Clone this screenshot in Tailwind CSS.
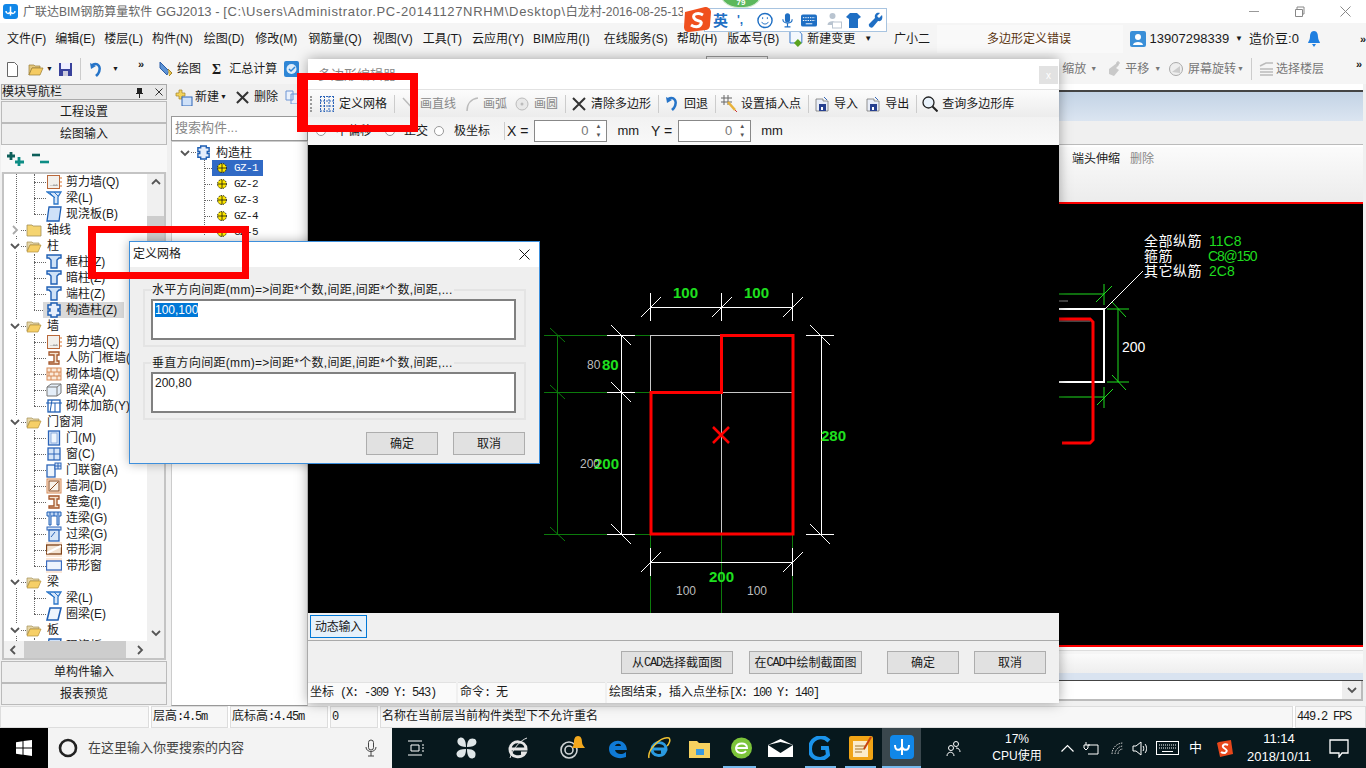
<!DOCTYPE html>
<html lang="zh-CN">
<head>
<meta charset="UTF-8">
<title>广联达BIM钢筋算量软件 GGJ2013</title>
<script src="https://cdn.jsdelivr.net/npm/@tailwindcss/browser@4"></script>
</head>
<body class="relative w-[1366px] h-[768px] overflow-hidden bg-white text-[12px] text-[#1a1a1a] font-['Liberation_Sans','Noto_Sans_CJK_SC',sans-serif]">

<!-- icon symbols -->
<svg class="hidden">
  <symbol id="col" viewBox="0 0 16 16"><path d="M1 1h14v3h-2l-2 2v8H5V6L3 4H1z" fill="#cfe2f7" stroke="#1f5fb4" stroke-width="1.4"/></symbol>
  <symbol id="wall" viewBox="0 0 16 16"><rect x="1.5" y="1.5" width="12" height="13" fill="#f2f0ec" stroke="#b9683a"/><path d="M4 12l1-1 1 1 2-2 1 1 2-1 1 2z" fill="#aaa"/><path d="M15 3v2M15 7v2M15 11v2" stroke="#d9752f"/></symbol>
  <symbol id="beam" viewBox="0 0 16 16"><path d="M1 2h14l-3 5v7H8V7z" fill="#d6e7fa" stroke="#2d77c9" stroke-width="1.3"/><path d="M4 3l5 5M8 2l4 4" stroke="#2d77c9"/></symbol>
  <symbol id="slab" viewBox="0 0 16 16"><path d="M3 1h12l-2 14H1z" fill="#cfe1f8" stroke="#1f5fb4" stroke-width="1.3"/></symbol>
  <symbol id="gzz" viewBox="0 0 16 16"><path d="M5 1h6v2h3v4h-2v2h2v4h-3v2H5v-2H2V9h2V7H2V3h3z" fill="#e6eefb" stroke="#1f5fb4" stroke-width="1.5"/></symbol>
  <symbol id="frame" viewBox="0 0 16 16"><path d="M3 2h10v3h-2v6h2v3H3v-2h5V5H3z" fill="#f4e2cf" stroke="#a4562a" stroke-width="1.3"/></symbol>
  <symbol id="brick" viewBox="0 0 16 16"><rect x="1" y="2" width="14" height="12" fill="#fbeadb" stroke="#d68a57"/><path d="M1 6h14M1 10h14M5 2v4M11 2v4M8 6v4M3 6v4M13 6v4M5 10v4M11 10v4" stroke="#d68a57"/></symbol>
  <symbol id="dark" viewBox="0 0 16 16"><path d="M1 5l4-3h10v9l-4 3H1z" fill="#e4eef9" stroke="#777"/><path d="M1 5h10v9M11 5l4-3" stroke="#777" fill="none"/></symbol>
  <symbol id="rein" viewBox="0 0 16 16"><rect x="2" y="2" width="12" height="12" fill="none" stroke="#1f5fb4" stroke-width="1.3"/><path d="M0 5h16M6 2l-2 12M9 5v9" stroke="#1f5fb4"/></symbol>
  <symbol id="door" viewBox="0 0 16 16"><rect x="2.5" y="1" width="11" height="14" fill="#d6e5f8" stroke="#2c64b8" stroke-width="1.3"/><rect x="5" y="3" width="6" height="10" fill="#eef5fd" stroke="#6d95d5" stroke-width=".7"/></symbol>
  <symbol id="win" viewBox="0 0 16 16"><rect x="2" y="2" width="12" height="12" fill="#d6e5f8" stroke="#2c64b8" stroke-width="1.3"/><path d="M8 2v12M2 8h12" stroke="#2c64b8"/></symbol>
  <symbol id="dwin" viewBox="0 0 16 16"><rect x="1" y="3" width="8" height="12" fill="#eef5fd" stroke="#2c64b8" stroke-width="1.3"/><rect x="9" y="1" width="6" height="6" fill="#d6e5f8" stroke="#2c64b8"/><path d="M12 1v6M9 4h6" stroke="#2c64b8"/></symbol>
  <symbol id="hole" viewBox="0 0 16 16"><rect x="1" y="1" width="14" height="14" fill="#fbeadb" stroke="#d68a57"/><rect x="3" y="3" width="10" height="10" fill="#f8f2ea" stroke="#8a4a20"/><path d="M4 12l8-8" stroke="#8a4a20"/></symbol>
  <symbol id="lin" viewBox="0 0 16 16"><path d="M1 2h14v4h-2v9h-2V6H5v9H3V6H1z" fill="#bcd4f3" stroke="#1f5fb4"/><path d="M4 2v4M8 2v4M12 2v4" stroke="#1f5fb4"/></symbol>
  <symbol id="guo" viewBox="0 0 16 16"><rect x="1" y="1" width="14" height="3" fill="#d6e5f8" stroke="#2c64b8"/><rect x="3" y="4" width="10" height="11" fill="#d6e5f8" stroke="#2c64b8" stroke-width="1.3"/><path d="M5 11l4-5" stroke="#2c64b8"/></symbol>
  <symbol id="band" viewBox="0 0 16 16"><path d="M0 0h16v15H0z" fill="#f9e6d6"/><rect x="0.5" y="3" width="15" height="9" fill="#f3e3d2" stroke="#7e4218" stroke-width="1.3"/><path d="M1 11l14-7" stroke="#fff" stroke-width="2"/></symbol>
  <symbol id="bandw" viewBox="0 0 16 16"><path d="M0 0h16v15H0z" fill="#fbe6d6"/><rect x="0.5" y="3" width="15" height="9" fill="#eef4fd" stroke="#3a6cc0" stroke-width="1.3"/></symbol>
  <symbol id="ring" viewBox="0 0 16 16"><path d="M4 2h11l-3 12H1z" fill="#eef5fd" stroke="#1f5fb4" stroke-width="1.6"/></symbol>
  <symbol id="folder" viewBox="0 0 16 16"><path d="M1 4h5l1 1h6v2H4L1 13z" fill="#e6d6a8" stroke="#a39055" stroke-width=".7"/><path d="M4 7h11l-3 7H1z" fill="#f6cf67" stroke="#b38f3a" stroke-width=".7"/></symbol>
  <symbol id="closed" viewBox="0 0 16 16"><path d="M1 3h5l1 1h8v10H1z" fill="#f5d470" stroke="#a39055" stroke-width=".8"/></symbol>
  <symbol id="down" viewBox="0 0 12 12"><path d="M2 4l4 4 4-4" fill="none" stroke="#555" stroke-width="1.8"/></symbol>
  <symbol id="right" viewBox="0 0 12 12"><path d="M4 2l4 4-4 4" fill="none" stroke="#aaa" stroke-width="1.8"/></symbol>
  <symbol id="gz" viewBox="0 0 12 12"><circle cx="6" cy="6" r="4.5" fill="#ffe800" stroke="#111" stroke-dasharray="1.4 1"/><path d="M2 6h8M6 2v8" stroke="#111" stroke-width=".8"/></symbol>
  <symbol id="disk" viewBox="0 0 16 16"><path d="M2 3h7v2h5v10H2z" fill="#e9eef8" stroke="#777" stroke-width=".8"/><rect x="5" y="8" width="7" height="7" fill="#27408f"/><rect x="7" y="11" width="2" height="3" fill="#fff"/><path d="M10 1l3 3" stroke="#3465b5"/></symbol>
</svg>

<!-- main application window -->
<div class="flex flex-col h-[768px]">
  <!-- title bar -->
  <div class="flex items-center h-[23px] bg-white pl-[3px] text-[13px] text-[#666]">
    <svg width="15" height="15" viewBox="0 0 15 15"><rect width="15" height="15" rx="3" fill="#1187e8"/><path d="M7.5 2.5v9M3 7c0 3 3 3 4.500 1 1.500 2 4.500 2 4.500-1" fill="none" stroke="#fff" stroke-width="1.500"/></svg>
    <span class="ml-[5px] w-[660px] overflow-hidden whitespace-nowrap"><span class="text-[12px]">广联达BIM钢筋算量软件</span> GGJ2013 - <span class="text-[13px] tracking-[0.67px]">[C:\Users\Administrator.PC-20141127NRHM\Desktop\</span><span class="text-[12px]">白龙村-2016-08-25-13-27</span></span>
    <div class="ml-auto flex items-center text-[#888]">
      <span class="w-[10px] border-t border-[#999] mr-[35px]"></span>
      <svg width="11" height="11" viewBox="0 0 11 11" class="mr-[35px]"><path d="M1.500 3.500h7v7h-7zM3 3.500V1h7v7H8.500" fill="none" stroke="#888"/></svg>
      <svg width="11" height="11" viewBox="0 0 11 11" class="mr-[15px]"><path d="M.5.5l10 10M10.500.5l-10 10" stroke="#888"/></svg>
    </div>
  </div>

  <!-- menu bar -->
  <div class="flex items-center h-[31px] bg-[#f5f5f5] pl-[7px] gap-[9px] whitespace-nowrap">
    <span>文件(F)</span><span>编辑(E)</span><span>楼层(L)</span><span>构件(N)</span><span class="ml-[2px]">绘图(D)</span><span class="ml-[2px]">修改(M)</span><span class="ml-[2px]">钢筋量(Q)</span><span class="ml-[2px]">视图(V)</span><span class="ml-[1px]">工具(T)</span><span class="ml-[1px]">云应用(Y)</span><span>BIM应用(I)</span><span class="ml-[5px]">在线服务(S)</span><span>帮助(H)</span><span class="ml-[1px]">版本号(B)</span>
    <svg width="16" height="18" viewBox="0 0 16 18"><path d="M2 1h9l3 3v9H2z" fill="#f4f8fd" stroke="#3a78c9"/><path d="M10 9l4 4-4 4-4-4z" fill="#5ba31f"/></svg>
    <span class="-ml-[6px]">新建变更</span>
    <span class="text-[8px] ml-[0px]">▼</span>
    <span class="ml-[13px]">广小二</span>
    <div class="flex items-center h-[28px] w-[187px] -ml-[2px] pl-[50px] bg-[#f9f9f9] text-[#5b3510] text-[12px]">多边形定义错误</div>
    <div class="flex items-center -ml-[2px]">
      <svg width="16" height="16" viewBox="0 0 16 16"><rect width="16" height="16" rx="2" fill="#3a8fd8"/><circle cx="8" cy="6" r="3" fill="#fff"/><path d="M3 14c0-4 10-4 10 0z" fill="#fff"/></svg>
      <span class="ml-[4px] text-[13px]">13907298339</span>
      <span class="ml-[6px] text-[8px]">▼</span>
      <span class="ml-[6px] text-[13px]">造价豆:0</span>
      <svg class="ml-[8px]" width="14" height="18" viewBox="0 0 14 18"><path d="M7 1c3 0 4 3 4 6s2 5 2 6H1c0-1 2-3 2-6s1-6 4-6zM5 14h4l-2 3z" fill="#1f7fe0"/></svg>
      <span class="ml-[39px] font-bold text-[11px] leading-[28px] self-start">»</span>
    </div>
  </div>

  <!-- toolbar -->
  <div class="flex items-center h-[30px] bg-[#f5f5f5] pl-[6px] whitespace-nowrap">
    <svg width="13" height="15" viewBox="0 0 13 15"><path d="M1.500.5h7l3 3v11h-10z" fill="#fff" stroke="#666"/></svg>
    <svg class="ml-[9px]" width="16" height="14" viewBox="0 0 16 14"><path d="M1 3h5l1 1h5v2H4L1 13z" fill="#e3c77d" stroke="#9a7d34" stroke-width=".7"/><path d="M4 6h11l-3 7H1z" fill="#f5cb62" stroke="#9a7d34" stroke-width=".7"/></svg>
    <span class="ml-[2px] text-[7px]">▼</span>
    <svg class="ml-[5px]" width="15" height="15" viewBox="0 0 15 15"><path d="M1 1h13v13H1z" fill="#39429c"/><rect x="3" y="1" width="9" height="6" fill="#eef"/><rect x="5" y="9" width="5" height="5" fill="#ccd"/></svg>
    <span class="ml-[7px] h-[22px] border-l border-[#ccc]"></span>
    <svg class="ml-[8px]" width="14" height="15" viewBox="0 0 14 15"><path d="M3 3c6-3 10 2 6 9l-2 2" fill="none" stroke="#2674c8" stroke-width="2.500"/><path d="M1 1l1 6 5-3z" fill="#2674c8"/></svg>
    <span class="ml-[9px] text-[7px]">▼</span>
    <span class="ml-[19px] -mt-[10px] text-[11px] font-bold">»</span>
    <svg class="ml-[14px]" width="16" height="18" viewBox="0 0 16 18"><path d="M2 2l9 9-2 4-7-7z" fill="#5d93d5" stroke="#2a5da8"/><path d="M10 9l4 4-3 3" fill="#e8c24a" stroke="#a3842a"/></svg>
    <span class="ml-[3px]">绘图</span>
    <span class="ml-[11px] text-[14px] font-bold font-['Liberation_Serif']">Σ</span>
    <span class="ml-[8px]">汇总计算</span>
    <svg class="ml-[7px]" width="15" height="16" viewBox="0 0 15 16"><rect width="15" height="16" rx="2" fill="#2e86d6"/><circle cx="7.500" cy="8" r="5" fill="#dcecfa"/><path d="M5 8l2 2 4-4" fill="none" stroke="#2e86d6" stroke-width="1.500"/></svg>
    <span class="ml-[407px] self-start w-[62px] h-[6px] mt-[2px] border border-[#999] border-b-0"></span>
    <span class="ml-[294px] text-[#777]">缩放</span>
    <span class="ml-[4px] text-[7px] text-[#777]">▼</span>
    <svg class="ml-[9px]" width="16" height="18" viewBox="0 0 16 18"><path d="M3 9l8-6 2 2-3 3 3 2-5 6-5-2z" fill="#c9c9c9"/><path d="M12 1v4M10 3h4" stroke="#bbb"/></svg>
    <span class="ml-[3px] text-[#777]">平移</span>
    <span class="ml-[5px] text-[7px] text-[#777]">▼</span>
    <svg class="ml-[7px]" width="16" height="16" viewBox="0 0 16 16"><circle cx="8" cy="8" r="6.500" fill="#eee" stroke="#aaa"/><path d="M4 11l8-6v7z" fill="#ccc"/></svg>
    <span class="ml-[4px] text-[#777]">屏幕旋转</span>
    <span class="ml-[1px] text-[7px] text-[#777]">▼</span>
    <span class="ml-[7px] h-[22px] border-l border-[#ccc]"></span>
    <svg class="ml-[7px]" width="15" height="14" viewBox="0 0 15 14"><path d="M1 4l6-3h7M1 7h13M1 10h13M1 13h13" fill="none" stroke="#bbb" stroke-width="1.500"/></svg>
    <span class="ml-[2px] text-[#777]">选择楼层</span>
    <span class="ml-auto mr-[4px] -mt-[10px] text-[11px] font-bold">»</span>
  </div>

  <!-- workspace -->
  <div class="flex h-[622px] bg-[#f0f0f0]">
    <!-- module navigation panel -->
    <div class="flex flex-col w-[167px] shrink-0 pl-[1px]">
      <div class="flex items-center h-[16px] text-[12px] bg-[#e8e8e8] border border-[#aaa]">模块导航栏
        <svg class="ml-auto" width="9" height="11" viewBox="0 0 9 11"><path d="M2 1h5v5h1v1H5v4H4V7H1V6h1z" fill="#222"/></svg>
        <svg class="ml-[11px] mr-[3px]" width="8" height="8" viewBox="0 0 8 8"><path d="M.5.5l7 7M7.500.5l-7 7" stroke="#333"/></svg>
      </div>
      <div class="flex items-center justify-center h-[22px] mt-[1px] text-[12px] bg-[#efefef] border border-[#bbb]">工程设置</div>
      <div class="flex items-center justify-center h-[22px] text-[12px] bg-[#efefef] border border-[#bbb]">绘图输入</div>
      <div class="flex items-center gap-[8px] h-[27px] pl-[6px] bg-[#f8f8f8]">
        <svg width="17" height="16" viewBox="0 0 17 16"><path d="M4 1v8M0 5h8" stroke="#0d5f5a" stroke-width="2.800"/><path d="M12 6v9M8 11h9" stroke="#0d8d85" stroke-width="2.800"/></svg>
        <svg width="17" height="14" viewBox="0 0 17 14"><path d="M0 3h8" stroke="#0d5f5a" stroke-width="2.600"/><path d="M8 10h9" stroke="#0d8d85" stroke-width="2.600"/></svg>
      </div>
      <!-- tree -->
      <div class="flex flex-col h-[488px] mx-[1px] border-2 border-[#c4c4c4] bg-white">
        <div class="flex flex-1 min-h-0">
          <div class="relative flex-1 overflow-hidden text-[12px] leading-none">
            <span class="absolute left-[12px] top-0 h-full border-l border-dotted border-[#666]"></span>
            <span class="absolute left-[30px] top-0 h-[40px] border-l border-dotted border-[#666]"></span>
            <span class="absolute left-[30px] top-[80px] h-[56px] border-l border-dotted border-[#666]"></span>
            <span class="absolute left-[30px] top-[160px] h-[72px] border-l border-dotted border-[#666]"></span>
            <span class="absolute left-[30px] top-[256px] h-[136px] border-l border-dotted border-[#666]"></span>
            <span class="absolute left-[30px] top-[416px] h-[24px] border-l border-dotted border-[#666]"></span>
            <span class="absolute left-[30px] top-[464px] h-[10px] border-l border-dotted border-[#666]"></span>

            <div class="flex items-center h-4 pl-[30px]"><span class="w-[12px] border-t border-dotted border-[#666]"></span><svg class="size-4 bg-white"><use href="#wall"/></svg><span class="ml-[4px]">剪力墙(Q)</span></div>
            <div class="flex items-center h-4 pl-[30px]"><span class="w-[12px] border-t border-dotted border-[#666]"></span><svg class="size-4 bg-white"><use href="#beam"/></svg><span class="ml-[4px]">梁(L)</span></div>
            <div class="flex items-center h-4 pl-[30px]"><span class="w-[12px] border-t border-dotted border-[#666]"></span><svg class="size-4 bg-white"><use href="#slab"/></svg><span class="ml-[4px]">现浇板(B)</span></div>
            <div class="relative flex items-center h-4 pl-[5px]"><svg class="size-3 bg-white"><use href="#right"/></svg><span class="w-[5px] border-t border-dotted border-[#666]"></span><svg class="size-4 bg-white"><use href="#closed"/></svg><span class="ml-[5px]">轴线</span></div>
            <div class="relative flex items-center h-4 pl-[5px]"><svg class="size-3 bg-white"><use href="#down"/></svg><span class="w-[5px] border-t border-dotted border-[#666]"></span><svg class="size-4 bg-white"><use href="#folder"/></svg><span class="ml-[5px]">柱</span></div>
            <div class="flex items-center h-4 pl-[30px]"><span class="w-[12px] border-t border-dotted border-[#666]"></span><svg class="size-4 bg-white"><use href="#col"/></svg><span class="ml-[4px]">框柱(Z)</span></div>
            <div class="flex items-center h-4 pl-[30px]"><span class="w-[12px] border-t border-dotted border-[#666]"></span><svg class="size-4 bg-white"><use href="#col"/></svg><span class="ml-[4px]">暗柱(Z)</span></div>
            <div class="flex items-center h-4 pl-[30px]"><span class="w-[12px] border-t border-dotted border-[#666]"></span><svg class="size-4 bg-white"><use href="#col"/></svg><span class="ml-[4px]">端柱(Z)</span></div>
            <div class="flex items-center h-4 pl-[30px]"><span class="w-[9px] border-t border-dotted border-[#666]"></span><div class="relative flex items-center w-[81px] h-4 pl-[3px] bg-[#d9d9d9]"><svg class="size-4"><use href="#gzz"/></svg><span class="ml-[4px]">构造柱(Z)</span></div></div>
            <div class="relative flex items-center h-4 pl-[5px]"><svg class="size-3 bg-white"><use href="#down"/></svg><span class="w-[5px] border-t border-dotted border-[#666]"></span><svg class="size-4 bg-white"><use href="#folder"/></svg><span class="ml-[5px]">墙</span></div>
            <div class="flex items-center h-4 pl-[30px]"><span class="w-[12px] border-t border-dotted border-[#666]"></span><svg class="size-4 bg-white"><use href="#wall"/></svg><span class="ml-[4px]">剪力墙(Q)</span></div>
            <div class="flex items-center h-4 pl-[30px] whitespace-nowrap"><span class="w-[12px] border-t border-dotted border-[#666]"></span><svg class="size-4 bg-white"><use href="#frame"/></svg><span class="ml-[4px]">人防门框墙(R)</span></div>
            <div class="flex items-center h-4 pl-[30px]"><span class="w-[12px] border-t border-dotted border-[#666]"></span><svg class="size-4 bg-white"><use href="#brick"/></svg><span class="ml-[4px]">砌体墙(Q)</span></div>
            <div class="flex items-center h-4 pl-[30px]"><span class="w-[12px] border-t border-dotted border-[#666]"></span><svg class="size-4 bg-white"><use href="#dark"/></svg><span class="ml-[4px]">暗梁(A)</span></div>
            <div class="flex items-center h-4 pl-[30px] whitespace-nowrap"><span class="w-[12px] border-t border-dotted border-[#666]"></span><svg class="size-4 bg-white"><use href="#rein"/></svg><span class="ml-[4px]">砌体加筋(Y)</span></div>
            <div class="relative flex items-center h-4 pl-[5px]"><svg class="size-3 bg-white"><use href="#down"/></svg><span class="w-[5px] border-t border-dotted border-[#666]"></span><svg class="size-4 bg-white"><use href="#folder"/></svg><span class="ml-[5px]">门窗洞</span></div>
            <div class="flex items-center h-4 pl-[30px]"><span class="w-[12px] border-t border-dotted border-[#666]"></span><svg class="size-4 bg-white"><use href="#door"/></svg><span class="ml-[4px]">门(M)</span></div>
            <div class="flex items-center h-4 pl-[30px]"><span class="w-[12px] border-t border-dotted border-[#666]"></span><svg class="size-4 bg-white"><use href="#win"/></svg><span class="ml-[4px]">窗(C)</span></div>
            <div class="flex items-center h-4 pl-[30px]"><span class="w-[12px] border-t border-dotted border-[#666]"></span><svg class="size-4 bg-white"><use href="#dwin"/></svg><span class="ml-[4px]">门联窗(A)</span></div>
            <div class="flex items-center h-4 pl-[30px]"><span class="w-[12px] border-t border-dotted border-[#666]"></span><svg class="size-4 bg-white"><use href="#hole"/></svg><span class="ml-[4px]">墙洞(D)</span></div>
            <div class="flex items-center h-4 pl-[30px]"><span class="w-[12px] border-t border-dotted border-[#666]"></span><svg class="size-4 bg-white"><use href="#frame"/></svg><span class="ml-[4px]">壁龛(I)</span></div>
            <div class="flex items-center h-4 pl-[30px]"><span class="w-[12px] border-t border-dotted border-[#666]"></span><svg class="size-4 bg-white"><use href="#lin"/></svg><span class="ml-[4px]">连梁(G)</span></div>
            <div class="flex items-center h-4 pl-[30px]"><span class="w-[12px] border-t border-dotted border-[#666]"></span><svg class="size-4 bg-white"><use href="#guo"/></svg><span class="ml-[4px]">过梁(G)</span></div>
            <div class="flex items-center h-4 pl-[30px]"><span class="w-[12px] border-t border-dotted border-[#666]"></span><svg class="size-4 bg-white"><use href="#band"/></svg><span class="ml-[4px]">带形洞</span></div>
            <div class="flex items-center h-4 pl-[30px]"><span class="w-[12px] border-t border-dotted border-[#666]"></span><svg class="size-4 bg-white"><use href="#bandw"/></svg><span class="ml-[4px]">带形窗</span></div>
            <div class="relative flex items-center h-4 pl-[5px]"><svg class="size-3 bg-white"><use href="#down"/></svg><span class="w-[5px] border-t border-dotted border-[#666]"></span><svg class="size-4 bg-white"><use href="#folder"/></svg><span class="ml-[5px]">梁</span></div>
            <div class="flex items-center h-4 pl-[30px]"><span class="w-[12px] border-t border-dotted border-[#666]"></span><svg class="size-4 bg-white"><use href="#beam"/></svg><span class="ml-[4px]">梁(L)</span></div>
            <div class="flex items-center h-4 pl-[30px]"><span class="w-[12px] border-t border-dotted border-[#666]"></span><svg class="size-4 bg-white"><use href="#ring"/></svg><span class="ml-[4px]">圈梁(E)</span></div>
            <div class="relative flex items-center h-4 pl-[5px]"><svg class="size-3 bg-white"><use href="#down"/></svg><span class="w-[5px] border-t border-dotted border-[#666]"></span><svg class="size-4 bg-white"><use href="#folder"/></svg><span class="ml-[5px]">板</span></div>
            <div class="flex items-center h-4 pl-[30px]"><span class="w-[12px] border-t border-dotted border-[#666]"></span><svg class="size-4 bg-white"><use href="#slab"/></svg><span class="ml-[4px]">现浇板(B)</span></div>
          </div>
          <!-- vertical scrollbar -->
          <div class="flex flex-col items-center w-[17px] bg-[#f0f0f0]">
            <svg class="size-3 mt-[2px] rotate-180"><use href="#down"/></svg>
            <div class="w-full h-[50px] mt-[28px] bg-[#cdcdcd]"></div>
            <svg class="size-3 mt-auto mb-[2px]"><use href="#down"/></svg>
          </div>
        </div>
        <!-- horizontal scrollbar -->
        <div class="flex items-center h-[17px] bg-[#f0f0f0]">
          <svg class="size-3 ml-[3px] rotate-90"><use href="#down"/></svg>
          <div class="w-[102px] h-full ml-[5px] bg-[#cdcdcd]"></div>
          <svg class="size-3 ml-[8px] -rotate-90"><use href="#down"/></svg>
        </div>
      </div>
      <div class="flex items-center justify-center h-[22px] mt-[1px] text-[12px] bg-[#efefef] border border-[#bbb]">单构件输入</div>
      <div class="flex items-center justify-center h-[22px] text-[12px] bg-[#efefef] border border-[#bbb]">报表预览</div>
    </div>

    <!-- component list -->
    <div class="flex flex-col w-[137px] shrink-0 ml-[4px]">
      <div class="flex items-center h-[32px] pb-[6px] pl-[4px] whitespace-nowrap overflow-hidden">
        <svg width="18" height="17" viewBox="0 0 16 17"><path d="M3 1h3v3h3v3H6v3H3V7H0V4h3z" fill="#f3d35a" stroke="#a3842a" stroke-width=".7"/><rect x="6" y="8" width="10" height="9" fill="#cfe1f8" stroke="#2c64b8"/></svg>
        <span class="ml-[2px]">新建</span><span class="text-[7px] ml-[1px]">▼</span>
        <svg class="ml-[9px]" width="13" height="13" viewBox="0 0 14 14"><path d="M1 1l12 12M13 1L1 13" stroke="#333" stroke-width="2.200"/></svg>
        <span class="ml-[5px]">删除</span>
        <svg class="ml-[7px]" width="14" height="14" viewBox="0 0 14 14"><path d="M1 1h7v9H1zM6 4h7v10H6z" fill="#eaf1fb" stroke="#6d95d5"/></svg>
      </div>
      <div class="flex items-center h-[25px] pl-[3px] pb-[2px] bg-white border border-[#999] text-[#888] text-[13px]">搜索构件...</div>
      <div class="relative flex-1 bg-white border border-[#ccc] border-b-[#999] pl-[7px] pt-[2px]">
        <span class="absolute left-[32px] top-[18px] h-[75px] border-l border-dotted border-[#666]"></span>
        <div class="flex items-center h-[17px]"><svg class="size-3"><use href="#down"/></svg><span class="w-[5px] border-t border-dotted border-[#666]"></span><svg class="size-[15px]"><use href="#gzz"/></svg><span class="ml-[5px]">构造柱</span></div>
        <div class="flex items-center h-4 pl-[26px] -mt-[1px]"><span class="w-[7px] border-t border-dotted border-[#666]"></span><div class="flex items-center w-[51px] h-4 pl-[4px] bg-[#316ac5] text-white"><svg class="size-3"><use href="#gz"/></svg><span class="ml-[6px] text-[11px] font-['Liberation_Mono'] tracking-[-0.6px]">GZ-1</span></div></div>
        <div class="flex items-center h-4 pl-[26px]"><span class="w-[7px] border-t border-dotted border-[#666]"></span><div class="flex items-center pl-[4px]"><svg class="size-3"><use href="#gz"/></svg><span class="ml-[6px] text-[11px] font-['Liberation_Mono'] tracking-[-0.6px]">GZ-2</span></div></div>
        <div class="flex items-center h-4 pl-[26px]"><span class="w-[7px] border-t border-dotted border-[#666]"></span><div class="flex items-center pl-[4px]"><svg class="size-3"><use href="#gz"/></svg><span class="ml-[6px] text-[11px] font-['Liberation_Mono'] tracking-[-0.6px]">GZ-3</span></div></div>
        <div class="flex items-center h-4 pl-[26px]"><span class="w-[7px] border-t border-dotted border-[#666]"></span><div class="flex items-center pl-[4px]"><svg class="size-3"><use href="#gz"/></svg><span class="ml-[6px] text-[11px] font-['Liberation_Mono'] tracking-[-0.6px]">GZ-4</span></div></div>
        <div class="flex items-center h-4 pl-[26px]"><span class="w-[7px] border-t border-dotted border-[#666]"></span><div class="flex items-center pl-[4px]"><svg class="size-3"><use href="#gz"/></svg><span class="ml-[6px] text-[11px] font-['Liberation_Mono'] tracking-[-0.6px]">GZ-5</span></div></div>
      </div>
    </div>

    <!-- drawing area behind the editor -->
    <div class="flex flex-col flex-1 min-w-0 pr-[3px]">
      <div class="h-[6px] bg-white"></div>
      <div class="h-[2px] bg-[#444]"></div>
      <div class="h-[29px] bg-gradient-to-b from-[#c3d3e5] to-[#dbe5f1]"></div>
      <div class="h-[24px] bg-[#f0f0f0] border-b border-[#bbb]"></div>
      <div class="h-[2px] bg-white"></div>
      <div class="flex items-start h-[55px] pl-[764px] pt-[3px] bg-gradient-to-b from-[#fbfbfb] to-[#ececec] whitespace-nowrap text-[12px]">
        <span>端头伸缩</span><span class="ml-[10px] text-[#888]">删除</span>
      </div>
      <div class="h-[2px] bg-[#f00]"></div>
      <div class="relative h-[441px] bg-black overflow-hidden">
        <svg class="absolute inset-0" width="1055" height="441" viewBox="308 204 1055 441" fill="none" font-family="Liberation Sans, Noto Sans CJK SC, sans-serif">
          <path d="M1059 294h45M1104 284v21M1096 302l16-16M1059 397h45M1104 387v21M1097 405l16-16M1118 309v73M1107 309h22M1107 382h22M1112 302l14 15M1112 375l14 15" stroke="#1fdc1f"/>
          <path d="M1059 301h9M1059 321h31" stroke="#888"/>
          <path d="M1059 309h45v73h-45" stroke="#fff" stroke-width="2"/>
          <path d="M1105 309l38-38" stroke="#fff"/>
          <path d="M1059 319h31l3 3v118l-3 3h-28" stroke="#f00" stroke-width="3"/>
          <g font-size="14" fill="#fff"><text x="1144" y="246" letter-spacing=".5">全部纵筋</text><text x="1144" y="261" letter-spacing=".5">箍筋</text><text x="1144" y="276" letter-spacing=".5">其它纵筋</text><text x="1122" y="352">200</text></g>
          <g font-size="14" fill="#1fdc1f"><text x="1209" y="246">11C8</text><text x="1208" y="261" letter-spacing="-1.200">C8@150</text><text x="1209" y="276">2C8</text></g>
        </svg>
      </div>
      <div class="h-[2px] bg-[#f00]"></div>
      <div class="h-[3px] bg-white"></div>
      <div class="h-[4px] bg-[#f6f6f6] border-t border-[#ddd]"></div>
      <div class="h-[19px] bg-gradient-to-b from-[#fbfbfb] to-[#eee]"></div>
      <div class="h-[7px] bg-[#d9e3f0]"></div>
      <div class="h-[1px] bg-[#444]"></div>
      <div class="flex justify-end h-[20px] bg-white border-b-2 border-r-2 border-[#bbb]">
        <div class="flex items-center justify-center w-[19px] bg-[#eee]"><svg class="size-3"><use href="#down"/></svg></div>
      </div>
    </div>
  </div>

  <!-- status bar -->
  <div class="flex h-[22px] gap-[2px] bg-white text-[12px] font-['Liberation_Mono','Noto_Sans_CJK_SC',monospace] whitespace-nowrap">
    <div class="w-[149px] bg-[#f7f7f7] border border-[#ddd]"></div>
    <div class="flex items-center w-[77px] pl-[1px] bg-[#f7f7f7] border border-[#ddd]">层高<span class="tracking-[-1.2px]">:4.5m</span></div>
    <div class="flex items-center w-[98px] pl-[1px] bg-[#f7f7f7] border border-[#ddd]">底标高<span class="tracking-[-1.2px]">:4.45m</span></div>
    <div class="flex items-center w-[48px] pl-[1px] bg-[#f7f7f7] border border-[#ddd]">0</div>
    <div class="flex items-center w-[913px] pl-[1px] bg-[#f7f7f7] border border-[#ddd]">名称在当前层当前构件类型下不允许重名</div>
    <div class="flex items-center flex-1 pl-[1px] bg-[#f7f7f7] border border-[#ddd] tracking-[-1.2px]">449.2 FPS</div>
  </div>

  <!-- windows taskbar -->
  <div class="relative flex items-center h-[40px] bg-[#07181d] text-white whitespace-nowrap">
    <div class="flex items-center justify-center w-[48px] h-full bg-black">
      <svg width="16" height="16" viewBox="0 0 16 16"><path d="M0 2.200l6.500-1v6.300H0zM7.500 1l8.500-1v7.500H7.500zM0 8.500h6.500v6.300l-6.500-1zM7.500 8.500H16V16l-8.500-1.200z" fill="#fff"/></svg>
    </div>
    <div class="flex items-center w-[344px] h-full pl-[10px] bg-[#f3f3f3] text-[#444] text-[13px]">
      <svg width="20" height="20" viewBox="0 0 20 20"><circle cx="10" cy="10" r="8" fill="none" stroke="#222" stroke-width="2.600"/></svg>
      <span class="ml-[10px]">在这里输入你要搜索的内容</span>
      <svg class="ml-auto mr-[15px]" width="12" height="18" viewBox="0 0 12 18"><rect x="3.500" y="1" width="5" height="10" rx="2.500" fill="none" stroke="#444"/><path d="M1 8c0 6 10 6 10 0M6 13v4M3 17h6" fill="none" stroke="#444"/></svg>
    </div>
    <svg class="ml-[16px]" width="16" height="16" viewBox="0 0 16 16"><path d="M0 1h14M3 5h8v6H3zM0 15h14M14 5h2M14 8h2M14 11h2" fill="none" stroke="#fff"/></svg>
    <svg class="ml-[31px]" width="23" height="24" viewBox="0 0 23 24"><path d="M11 11C4 11 1 7 3 3c3-3 8-2 8 8zM12 11c0-7 3-10 8-8 3 3 2 8-8 8zM12 13c7 0 10 3 8 8-3 3-8 2-8-8zM11 13c0 7-3 10-8 8-3-3-2-8 8-8z" fill="#dfe6e8"/></svg>
    <svg class="ml-[29px]" width="22" height="24" viewBox="0 0 22 24"><path d="M3 13h16c0-9-15-10-16 0 0 9 12 10 15 4h-4" fill="none" stroke="#e6e6e6" stroke-width="3"/><path d="M3 22C6 12 14 4 20 2" fill="none" stroke="#e6e6e6"/></svg>
    <svg class="ml-[30px]" width="27" height="26" viewBox="0 0 27 26"><circle cx="10" cy="15" r="8" fill="none" stroke="#cfd4d6" stroke-width="1.600"/><circle cx="10" cy="15" r="4" fill="none" stroke="#cfd4d6" stroke-width="1.600"/><path d="M19 1c3 0 4 3 4 6s2 4 3 6H13c1-2 2-3 2-6s1-6 4-6z" fill="#f3a81e"/></svg>
    <svg class="ml-[22px]" width="20" height="22" viewBox="0 0 20 22"><path d="M1 12C1 2 18 0 19 13H7c1 5 8 5 11 2v5c-7 3-17 0-17-8zM7 9h6c0-3-5-3-6 0z" fill="#0f7ad6"/></svg>
    <svg class="ml-[19px]" width="24" height="24" viewBox="0 0 24 24"><path d="M5 13h14c0-8-13-9-14 0 0 8 11 8 13 3h-4" fill="none" stroke="#2a9ae0" stroke-width="3"/><path d="M2 22C0 14 14 0 22 2c2 2 0 6-2 8" fill="none" stroke="#f1c232" stroke-width="1.500"/></svg>
    <svg class="ml-[17px]" width="23" height="21" viewBox="0 0 23 21"><path d="M1 3h8l2 2h11v15H1z" fill="#f6d160"/><rect x="8" y="11" width="8" height="6" fill="#3a9ae0"/></svg>
    <svg class="ml-[19px]" width="23" height="24" viewBox="0 0 23 24"><circle cx="11.500" cy="12" r="10.500" fill="#7cc43a"/><path d="M6 12h11c0-6-10-6-11 0 0 6 8 6 10 3" fill="none" stroke="#fff" stroke-width="2"/></svg>
    <svg class="ml-[15px]" width="25" height="18" viewBox="0 0 25 18"><path d="M0 6L12.500 0 25 6v12H0z" fill="#fff"/><path d="M0 6l12.500 8L25 6l-12.500-3z" fill="#07181d"/></svg>
    <svg class="ml-[16px]" width="22" height="24" viewBox="0 0 22 24"><path d="M20 5C12-3 1 3 1 13s12 13 18 6l-1-7h-6" fill="none" stroke="#1b93ea" stroke-width="4"/></svg>
    <svg class="ml-[18px]" width="24" height="24" viewBox="0 0 24 24"><rect width="24" height="24" rx="2" fill="#f0a416"/><rect x="4" y="5" width="15" height="16" fill="#fbeccb"/><path d="M6 10h10M6 13h10M6 16h7" stroke="#a3742a"/><path d="M22 1l-7 12" stroke="#c8430f" stroke-width="2"/></svg>
    <div class="flex items-center justify-center w-[39px] h-full ml-[9px] bg-[#3a474d] border-b-2 border-[#76b9ed]">
      <svg width="24" height="24" viewBox="0 0 24 24"><rect width="24" height="24" rx="4" fill="#1187e8"/><path d="M12 4v16M5 10c0 6 5 6 7 2 2 4 7 4 7-2" fill="none" stroke="#fff" stroke-width="2"/></svg>
    </div>
    <svg class="ml-[25px]" width="15" height="17" viewBox="0 0 15 17"><circle cx="10" cy="4" r="2.500" fill="none" stroke="#fff"/><circle cx="5" cy="8" r="2.500" fill="none" stroke="#fff"/><path d="M1 16c0-5 7-5 7 0M10 8c3 0 4 2 4 4" fill="none" stroke="#fff"/></svg>
    <div class="flex flex-col items-center w-[48px] ml-[32px] text-[12px] leading-[17px]"><span>17%</span><span>CPU使用</span></div>
    <svg class="ml-[20px]" width="13" height="8" viewBox="0 0 13 8"><path d="M.5 7.500l6-6 6 6" fill="none" stroke="#fff" stroke-width="1.200"/></svg>
    <svg class="ml-[9px]" width="16" height="15" viewBox="0 0 16 15"><path d="M5 4h10v9H5M1 4h6M3 1v3M1 4v3l2 2 2-2V4" fill="none" stroke="#fff"/></svg>
    <svg class="ml-[12px]" width="13" height="13" viewBox="0 0 13 13"><path d="M1 12c0-6 5-11 11-11M4 12c0-4 4-8 8-8M7 12c0-3 2-5 5-5" fill="none" stroke="#ccc" stroke-dasharray="1.500 1"/></svg>
    <svg class="ml-[8px]" width="16" height="15" viewBox="0 0 16 15"><path d="M1 5h3l5-4v13l-5-4H1zM11 5c1 1 1 4 0 5M13 3c2 2 2 7 0 9" fill="none" stroke="#fff"/></svg>
    <svg class="ml-[8px]" width="23" height="14" viewBox="0 0 23 14"><rect x=".5" y=".5" width="22" height="13" fill="none" stroke="#fff"/><path d="M3 4h17M3 7h17" stroke="#fff" stroke-dasharray="1 1"/><path d="M6 10.500h11" stroke="#fff"/></svg>
    <span class="ml-[10px] text-[13px]">中</span>
    <svg class="ml-[15px]" width="16" height="17" viewBox="0 0 16 17"><path d="M2 2l12-2 2 14-13 3-3-14z" fill="#e8471b"/><path d="M11 5C7 3 4 6 7 8s4 3 1 5c-2 0-3 0-4-1" fill="none" stroke="#fff" stroke-width="2"/></svg>
    <div class="flex flex-col items-center w-[66px] ml-[13px] text-[13px] leading-[18px]"><span>11:14</span><span>2018/10/11</span></div>
    <svg class="ml-[17px]" width="20" height="19" viewBox="0 0 20 19"><path d="M1 1h18v13h-6l-3 4v-4H1z" fill="none" stroke="#fff" stroke-width="1.300"/></svg>
    <!-- running-app underlines -->
    <span class="absolute left-[723px] bottom-0 w-[33px] h-[2px] bg-[#76b9ed]"></span>
    <span class="absolute left-[805px] bottom-0 w-[31px] h-[2px] bg-[#76b9ed]"></span>
    <span class="absolute left-[845px] bottom-0 w-[31px] h-[2px] bg-[#76b9ed]"></span>
  </div>
</div>

<!-- polygon editor window -->
<div class="absolute z-10 left-[308px] top-[59px] flex flex-col w-[751px] h-[644px] bg-[#f0f0f0] shadow-[0_0_12px_rgba(0,0,0,0.35)] whitespace-nowrap">
  <div class="flex h-[31px] bg-white border-b border-[#e2e2e2]">
    <span class="mt-[6px] ml-[10px] text-[13px] text-[#888]">多边形编辑器</span>
    <div class="flex items-center justify-center w-[19px] h-[18px] ml-auto mr-[1px] mt-[7px] bg-[#e2e2e2] text-white text-[10px]">x</div>
  </div>
  <!-- polygon toolbar -->
  <div class="flex items-center h-[27px] pl-[2px] bg-gradient-to-b from-[#fcfcfc] to-[#ececec]">
    <span class="h-[16px] border-l-2 border-dotted border-[#999]"></span>
    <svg class="ml-[8px]" width="14" height="16" viewBox="0 0 14 16"><path d="M.5 0v16M4.500 0v16M9 0v16M13.500 0v16M0 .5h14M0 5h14M0 10h14M0 15h14" stroke="#2c64b8" stroke-dasharray="2 1"/></svg>
    <span class="ml-[5px] text-[12px]">定义网格</span>
    <span class="ml-[7px] h-[18px] border-l border-[#ccc]"></span>
    <svg class="ml-[7px]" width="13" height="14" viewBox="0 0 13 14"><path d="M1 1l11 12" stroke="#bbb" stroke-width="1.500"/></svg>
    <span class="ml-[5px] text-[#888]">画直线</span>
    <svg class="ml-[10px]" width="12" height="14" viewBox="0 0 12 14"><path d="M1 14C1 7 5 2 12 1" fill="none" stroke="#bbb" stroke-width="1.500"/></svg>
    <span class="ml-[5px] text-[#888]">画弧</span>
    <svg class="ml-[8px]" width="14" height="14" viewBox="0 0 14 14"><circle cx="7" cy="7" r="6" fill="#e8e8e8" stroke="#bbb"/><circle cx="7" cy="7" r="1.500" fill="#bbb"/></svg>
    <span class="ml-[5px] text-[#888]">画圆</span>
    <span class="ml-[7px] h-[18px] border-l border-[#ccc]"></span>
    <svg class="ml-[6px]" width="14" height="14" viewBox="0 0 14 14"><path d="M1 1l12 12M13 1L1 13" stroke="#333" stroke-width="2"/></svg>
    <span class="ml-[5px]">清除多边形</span>
    <span class="ml-[7px] h-[18px] border-l border-[#ccc]"></span>
    <svg class="ml-[6px]" width="14" height="15" viewBox="0 0 14 15"><path d="M3 3c6-3 10 2 6 9l-2 2" fill="none" stroke="#2674c8" stroke-width="2.500"/><path d="M1 1l1 6 5-3z" fill="#2674c8"/></svg>
    <span class="ml-[5px]">回退</span>
    <span class="ml-[7px] h-[18px] border-l border-[#ccc]"></span>
    <svg class="ml-[5px]" width="16" height="17" viewBox="0 0 16 17"><path d="M3 0v10M7 0v10M0 3h11M0 7h11" stroke="#666"/><path d="M7 7l7 8" stroke="#e8b23a" stroke-width="2.500"/><path d="M14 15l2 2" stroke="#c33"/></svg>
    <span class="ml-[4px]">设置插入点</span>
    <span class="ml-[7px] h-[18px] border-l border-[#ccc]"></span>
    <svg class="ml-[5px] size-4"><use href="#disk"/></svg>
    <span class="ml-[4px]">导入</span>
    <svg class="ml-[7px] size-4"><use href="#disk"/></svg>
    <span class="ml-[4px]">导出</span>
    <span class="ml-[7px] h-[18px] border-l border-[#ccc]"></span>
    <svg class="ml-[5px]" width="16" height="16" viewBox="0 0 16 16"><circle cx="6.500" cy="6.500" r="5.500" fill="#e9f2fb" stroke="#222" stroke-width="1.300"/><path d="M10.500 10.500l5 5" stroke="#222" stroke-width="2"/></svg>
    <span class="ml-[4px]">查询多边形库</span>
  </div>
  <!-- coordinate options -->
  <div class="flex items-center h-[28px] pl-[8px] bg-gradient-to-b from-[#f2f2f2] to-[#f9f9f9]">
    <span class="size-[10px] rounded-full border border-[#999] bg-white"></span>
    <span class="ml-[10px] w-[49px]">不偏移</span>
    <span class="size-[10px] rounded-full border border-[#999] bg-white"></span>
    <span class="ml-[9px] w-[30px] text-[12px]">正交</span>
    <span class="size-[10px] rounded-full border border-[#999] bg-white"></span>
    <span class="ml-[10px] text-[12px]">极坐标</span>
    <span class="ml-[14px] h-[18px] border-l border-[#ccc]"></span>
    <span class="ml-[2px] text-[14px]">X =</span>
    <div class="flex items-center justify-end w-[73px] h-[22px] ml-[6px] pr-[18px] bg-white border border-[#888] text-[#777] text-[13px]">0
      <span class="absolute text-[6px] leading-[9px] -mr-[13px] text-[#555] text-center">▲<br>▼</span>
    </div>
    <span class="ml-[10px] text-[13px]">mm</span>
    <span class="ml-[12px] text-[14px]">Y =</span>
    <div class="flex items-center justify-end w-[73px] h-[22px] ml-[6px] pr-[18px] bg-white border border-[#888] text-[#777] text-[13px]">0
      <span class="absolute text-[6px] leading-[9px] -mr-[13px] text-[#555] text-center">▲<br>▼</span>
    </div>
    <span class="ml-[10px] text-[13px]">mm</span>
  </div>
  <!-- polygon canvas -->
  <div class="h-[468px] bg-black">
    <svg class="block" width="751" height="468" viewBox="308 145 751 468" fill="none" font-family="Liberation Sans, sans-serif">
      <g stroke="#0c7a0c"><path d="M544 335.500h63M635 335.500h15M544 392.500h63M635 392.500h15M544 534.500h63M635 534.500h15M557.500 335v199M550 328l15 14M550 385l15 14M550 527l15 14M650.500 534v14M650.500 576v37M721.500 534v79M792.500 534v14M792.500 576v37"/></g>
      <g stroke="#c8c8c8"><path d="M650 335.500h71M650.500 335v57M721.500 392v142M721 392.500h72"/></g>
      <g stroke="#fff"><path d="M650 307.500h143M650.500 293v28M721.500 293v28M792.500 293v28M641 317l20-20M712 317l20-20M783 317l20-20M621.500 335v199M607 335.500h28M607 392.500h28M607 534.500h28M611 325l20 20M611 382l20 20M611 524l20 20M821.500 335v199M806 335.500h28M806 534.500h28M810 325l20 20M810 524l20 20M650 562.500h143M650.500 548v28M792.500 548v28M641 572l20-20M783 572l20-20"/></g>
      <path d="M651 534V392.500h70.500V335.500H793V534z" stroke="#f00" stroke-width="3"/>
      <path d="M713 427l16 16M729 427l-16 16" stroke="#f00" stroke-width="2.500"/>
      <g font-size="15" font-weight="bold" fill="#1fe01f"><text x="673" y="298">100</text><text x="744" y="298">100</text><text x="602" y="370">80</text><text x="594" y="469">200</text><text x="821" y="441">280</text><text x="709" y="582">200</text></g>
      <g font-size="12" fill="#bdbdbd"><text x="587" y="369">80</text><text x="580" y="468">200</text><text x="676" y="595">100</text><text x="747" y="595">100</text></g>
    </svg>
  </div>
  <!-- dynamic input -->
  <div class="flex items-center h-[28px] pl-[2px] border-b border-[#aaa]">
    <div class="flex items-center justify-center w-[57px] h-[23px] bg-[#e5f1fb] border border-[#0078d7] tracking-[-0.3px]">动态输入</div>
  </div>
  <!-- bottom buttons -->
  <div class="flex items-center h-[41px] pt-[2px]">
    <div class="flex items-center justify-center w-[112px] h-[23px] ml-[313px] bg-[#e1e1e1] border border-[#adadad]">从<span class="font-['Liberation_Mono'] tracking-[-1.2px]">CAD</span>选择截面图</div>
    <div class="flex items-center justify-center w-[113px] h-[23px] ml-[16px] bg-[#e1e1e1] border border-[#adadad]">在<span class="font-['Liberation_Mono'] tracking-[-1.2px]">CAD</span>中绘制截面图</div>
    <div class="flex items-center justify-center w-[72px] h-[23px] ml-[25px] bg-[#e1e1e1] border border-[#adadad]">确定</div>
    <div class="flex items-center justify-center w-[72px] h-[23px] ml-[15px] bg-[#e1e1e1] border border-[#adadad]">取消</div>
  </div>
  <!-- editor status -->
  <div class="flex gap-[2px] h-[21px] flex-1 bg-[#f0f0f0] font-['Liberation_Mono','Noto_Sans_CJK_SC',monospace] text-[12px]">
    <div class="flex items-center w-[148px] pl-[2px] bg-[#fafafa] border-t border-[#e2e2e2]">坐标<span class="tracking-[-1.2px] whitespace-pre"> (X: -309 Y: 543)</span></div>
    <div class="flex items-center w-[147px] pl-[2px] bg-[#fafafa] border-t border-[#e2e2e2]">命令<span class="tracking-[-1.2px] whitespace-pre">: </span>无</div>
    <div class="flex items-center flex-1 pl-[2px] bg-[#fafafa] border-t border-[#e2e2e2]">绘图结束，插入点坐标<span class="tracking-[-1.2px] whitespace-pre">[X: 100 Y: 140]</span></div>
  </div>
</div>

<!-- define grid dialog -->
<div class="absolute z-20 left-[129px] top-[241px] flex flex-col w-[411px] h-[223px] bg-[#efefef] border border-[#3d8fdc] shadow-[0_0_10px_rgba(0,0,0,0.3)]">
  <div class="flex items-center justify-between h-[25px] pl-[3px] pr-[9px] pb-[1px] bg-white text-[12px]">定义网格
    <svg width="11" height="11" viewBox="0 0 11 11"><path d="M.5.5l10 10M10.500.5l-10 10" stroke="#111"/></svg>
  </div>
  <div class="relative h-[58px] mx-[13px] mt-[22px] pl-[6px] pr-[8px] pt-[8px] border-2 border-[#e4e4e4]">
    <span class="absolute left-[6px] -top-[8px] px-[1px] bg-[#efefef] leading-[14px] whitespace-nowrap tracking-[0.3px]">水平方向间距(mm)=&gt;间距*个数,间距,间距*个数,间距,...</span>
    <div class="h-[41px] pl-[2px] bg-white border-2 border-[#808080]"><span class="bg-[#0078d7] text-white">100,100</span></div>
  </div>
  <div class="relative h-[58px] mx-[13px] mt-[15px] pl-[6px] pr-[8px] pt-[8px] border-2 border-[#e4e4e4]">
    <span class="absolute left-[6px] -top-[8px] px-[1px] bg-[#efefef] leading-[14px] whitespace-nowrap tracking-[0.3px]">垂直方向间距(mm)=&gt;间距*个数,间距,间距*个数,间距,...</span>
    <div class="h-[41px] pl-[2px] bg-white border-2 border-[#808080]">200,80</div>
  </div>
  <div class="flex justify-end gap-[15px] mt-[12px] pr-[14px]">
    <div class="flex items-center justify-center w-[72px] h-[23px] bg-[#e1e1e1] border border-[#adadad] text-[12px]">确定</div>
    <div class="flex items-center justify-center w-[72px] h-[23px] bg-[#e1e1e1] border border-[#adadad] text-[12px]">取消</div>
  </div>
</div>

<!-- red annotation frames -->
<div class="absolute z-30 left-[297px] top-[73px] w-[121px] h-[59px] border-[#f00] border-y-[7px] border-r-[8px] border-l-[11px]"></div>
<div class="absolute z-30 left-[88px] top-[226px] w-[161px] h-[53px] border-[#f00] border-[7px] border-l-[8px]"></div>

<!-- sogou input bar -->
<div class="absolute z-40 left-[718px] -top-[12px] flex items-end justify-center w-[46px] h-[20px] rounded-b-full bg-[#5cb85c] border border-[#cfe8cf] text-white text-[8px] leading-[8px] font-bold">79</div>
<div class="absolute z-40 left-[704px] top-[8px] flex items-center w-[183px] h-[24px] pl-[8px] bg-white border border-[#a8c4e0]">
  <span class="text-[15px] leading-none font-bold text-[#1f6fc4]">英</span>
  <span class="ml-[9px] w-[11px] text-[12px] font-bold text-[#1f6fc4] leading-none">',</span>
  <svg class="ml-[9px]" width="16" height="17" viewBox="0 0 17 17"><circle cx="8.500" cy="8.500" r="7.500" fill="none" stroke="#1f6fc4" stroke-width="1.500"/><path d="M5 10c1 3 6 3 7 0" fill="none" stroke="#1f6fc4"/><path d="M6 5v2M11 5v2" stroke="#1f6fc4"/></svg>
  <svg class="ml-[9px]" width="11" height="17" viewBox="0 0 13 17"><rect x="3.500" y="0" width="6" height="11" rx="3" fill="#1f6fc4"/><path d="M1 7c0 6 11 6 11 0M6.500 12v4M3 16h7" fill="none" stroke="#1f6fc4" stroke-width="1.400"/></svg>
  <svg class="ml-[8px]" width="16" height="13" viewBox="0 0 17 13"><rect width="17" height="13" rx="2" fill="#1f6fc4"/><path d="M2 3.500h13M2 6.500h13" stroke="#fff" stroke-dasharray="1.500 1"/><path d="M5 10h7" stroke="#fff"/></svg>
  <svg class="ml-[9px]" width="16" height="17" viewBox="0 0 15 17"><circle cx="6" cy="4" r="3" fill="#b9c4d0"/><path d="M1 13c0-5 9-5 9 0z" fill="#b9c4d0"/><rect x="6" y="10" width="9" height="6" fill="#fff" stroke="#b9c4d0"/></svg>
  <svg class="ml-[4px]" width="15" height="15" viewBox="0 0 15 15"><path d="M4 0h7l4 4-3 2v9H3V6L0 4z" fill="#1f6fc4"/></svg>
  <svg class="ml-[7px]" width="15" height="17" viewBox="0 0 15 17"><path d="M14 3l-3 3-2-2 3-3c-3-1-6 1-5 5L1 12c-1 2 2 5 4 3l5-6c4 1 5-3 4-6z" fill="#1f6fc4"/></svg>
</div>
<svg class="absolute z-50 left-[683px] top-[6px]" width="29" height="27" viewBox="0 0 29 27"><path d="M2 6l20-5c3 0 6 2 6 5l-1 13c0 3-2 5-5 5L6 26c-3 0-5-2-5-5z" fill="#f0501e"/><path d="M20 9c-5-3-11-1-9 3s9 2 7 6-7 3-10 1" fill="none" stroke="#fff" stroke-width="3"/></svg>

</body>
</html>
